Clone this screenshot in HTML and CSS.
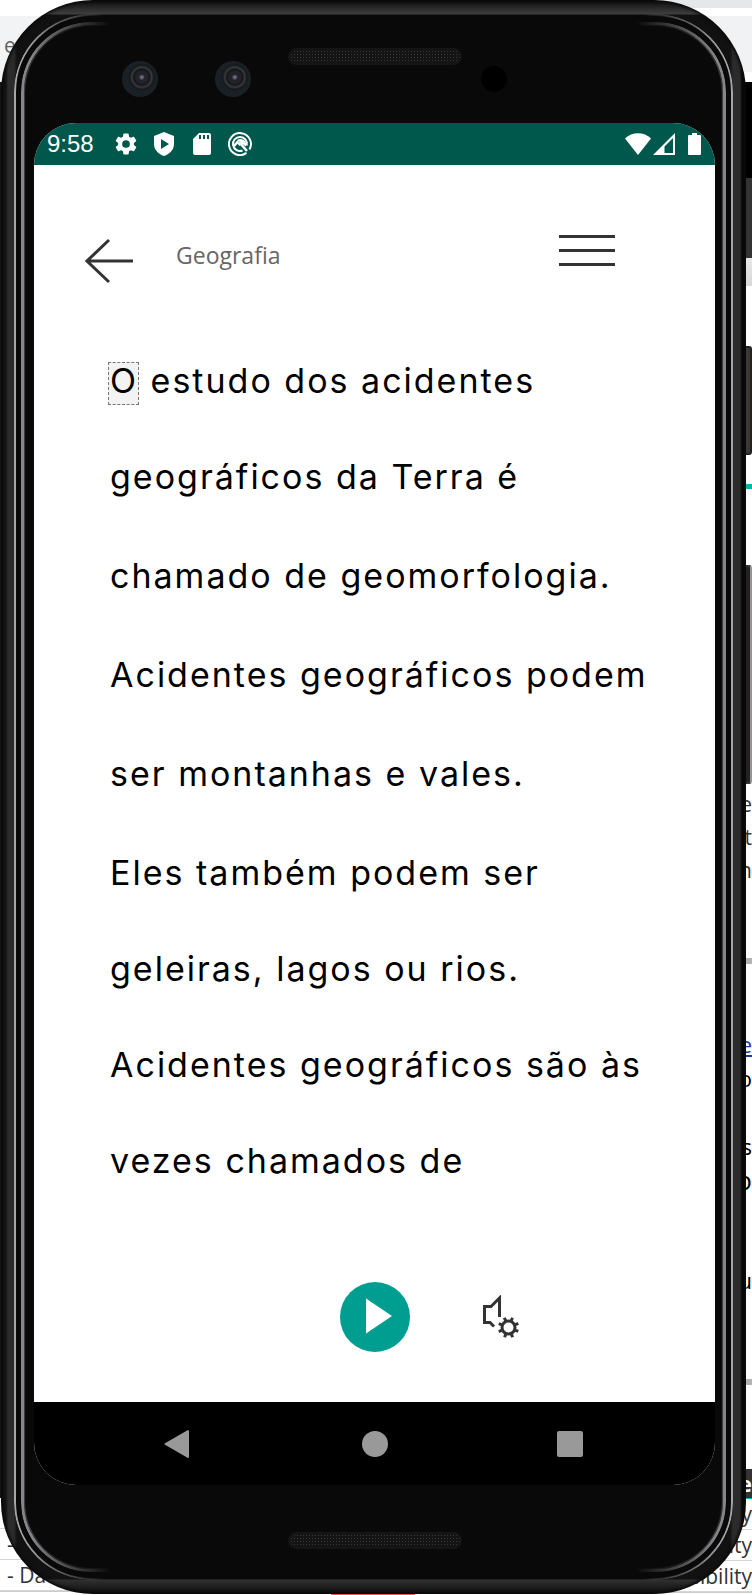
FILE: index.html
```html
<!DOCTYPE html>
<html lang="pt">
<head>
<meta charset="utf-8">
<meta name="viewport" content="width=device-width, initial-scale=1">
<title>Geografia</title>
<link rel="stylesheet" href="styles.css">
</head>
<body>
<div class="stage">
  <div class="backdrop backdrop-left">
    <div class="blank h16"></div>
    <div class="toolbar-left">e</div>
    <div class="side-shade"></div>
    <div class="list">
      <div class="list-row"></div>
      <div class="list-row">-</div>
      <div class="list-row">- Da</div>
    </div>
  </div>
  <div class="backdrop backdrop-right">
    <div class="tab-edge"></div>
    <div class="toolbar-right"></div>
    <div class="banner"></div>
    <div class="subbanner"></div>
    <div class="fade"></div>
    <div class="power"></div>
    <div class="teal"></div>
    <div class="volume"></div>
    <div class="lines"><span>e</span><span>t</span><span>n</span></div>
    <div class="rule"></div>
    <div class="copy"><a href="#more">e</a><span>o</span><span></span><span>s</span><span class="big">p</span></div>
    <div class="copy copy-late"><span>u</span></div>
    <div class="rule"></div>
    <div class="list list-right">
      <div class="list-head">e</div>
      <div class="list-row">y</div>
      <div class="list-row">ity</div>
      <div class="list-row">sibility</div>
    </div>
  </div>
  <div class="red-edge"></div>

  <div class="phone">
    <div class="bezel">
      <div class="bezel-top">
        <div class="cameras"><i class="camera"></i><i class="camera"></i></div>
        <div class="speaker"></div>
        <div class="sensor-wrap"><i class="sensor"></i></div>
      </div>

      <div class="screen">
        <div class="status">
          <span class="time">9:58</span>
          <svg class="s22" viewBox="2 2 20 20"><path fill="#fff" d="M19.14 12.94c.04-.3.06-.61.06-.94s-.02-.64-.07-.94l2.03-1.58a.49.49 0 0 0 .12-.61l-1.92-3.32a.49.49 0 0 0-.59-.22l-2.39.96a7 7 0 0 0-1.62-.94l-.36-2.54A.48.48 0 0 0 13.92 2.400h-3.840c-.24 0-.43.17-.47.41l-.36 2.540c-.59.24-1.130.57-1.620.94l-2.390-.96a.48.48 0 0 0-.59.22L2.740 8.870a.47.47 0 0 0 .12.61l2.030 1.580c-.05.3-.09.63-.09.94s.02.64.07.94l-2.030 1.580a.49.49 0 0 0-.12.61l1.920 3.320c.12.22.37.29.59.22l2.390-.96c.5.38 1.030.7 1.620.94l.36 2.540c.05.24.24.41.48.41h3.840c.24 0 .44-.17.47-.41l.36-2.540c.59-.24 1.130-.56 1.620-.94l2.390.96c.22.08.47 0 .59-.22l1.920-3.320a.47.47 0 0 0-.12-.61zM12 15.500a3.500 3.500 0 1 1 0-7 3.500 3.500 0 0 1 0 7z"/></svg>
          <svg class="s24" viewBox="0 0 24 24"><path fill="#fff" fill-rule="evenodd" d="M12 0 22 4v8c0 5.500-4 10-10 12C6 22 2 17.500 2 12V4zM9 7v10l8-5z"/></svg>
          <svg class="s22" viewBox="0 0 22 22"><path fill="#fff" fill-rule="evenodd" d="M8 0h10a2 2 0 0 1 2 2v18a2 2 0 0 1-2 2H4a2 2 0 0 1-2-2V6zM8 2v4h2V2zM12 2v4h2V2zM16 2v4h2V2z"/></svg>
          <svg class="s24" viewBox="0 0 24 24" fill="none" stroke="#fff" stroke-width="2"><path d="M18.500 20.900A11 11 0 1 1 21.500 17.500"/><path d="M14.500 18.500A7 7 0 1 1 18.800 13.500"/><path stroke-width="2.500" d="m6 14 3.500-4 3 3M12 11l7 8"/><path fill="#fff" stroke="none" d="M9 8c3-2 7-1 8.500 2 .8 1.500.8 3 .3 4.500z"/></svg>
          <span class="grow"></span>
          <svg class="wifi" viewBox="0 0 26 22"><path fill="#fff" d="M13 22 0 5.500C7-1.500 19-1.500 26 5.500z"/></svg>
          <svg class="s22" viewBox="0 0 22 22"><path fill="#fff" fill-rule="evenodd" d="M22 0v22H0zM20 5l-8.500 8.500V20H20z"/></svg>
          <svg class="battery" viewBox="0 0 13 22"><path fill="#fff" d="M4 0h5v2h3a1 1 0 0 1 1 1v18a1 1 0 0 1-1 1H1a1 1 0 0 1-1-1V3a1 1 0 0 1 1-1h3z"/></svg>
        </div>

        <header class="header">
          <button class="icon-btn back" aria-label="Voltar"><svg width="49" height="46" viewBox="0 0 49 46" fill="none" stroke="#333" stroke-width="3"><path d="M24 2 2 23l22 21M2 23h46"/></svg></button>
          <h1 class="title">Geografia</h1>
          <button class="icon-btn menu" aria-label="Menu"><svg width="56" height="32" viewBox="0 0 56 32" fill="#333"><path d="M0 0h56v3H0zM0 14h56v3H0zM0 28h56v3H0z"/></svg></button>
        </header>

        <main class="reader">
          <p class="tight"><mark>O</mark> estudo dos acidentes</p>
          <p>geográficos da Terra é</p>
          <p>chamado de geomorfologia.</p>
          <p>Acidentes geográficos podem</p>
          <p>ser montanhas e vales.</p>
          <p class="tight">Eles também podem ser</p>
          <p class="tight">geleiras, lagos ou rios.</p>
          <p class="tight">Acidentes geográficos são às</p>
          <p class="tight">vezes chamados de</p>
        </main>

        <div class="player">
          <button class="icon-btn play" aria-label="Reproduzir"><svg width="70" height="70" viewBox="0 0 70 70"><circle cx="35" cy="35" r="35" fill="#009e91"/><path fill="#fff" d="M26 16.500v35L52 34z"/></svg></button>
          <button class="icon-btn voice" aria-label="Configurar voz"><svg width="38" height="44" viewBox="0 0 38 44" fill="none" stroke="#333" stroke-width="3"><path d="M17.500 22V3L9 11.500H2.500v16H8l4 4"/><circle cx="26.500" cy="32.500" r="6.500" stroke-width="3"/><path d="M33 32.500h4M16 32.500h4M26.500 26v-4M26.500 39v4M31 28l3-3M22 28l-3-3M31 37l3 3M22 37l-3 3" transform="rotate(22 26.500 32.500)"/></svg></button>
        </div>

        <nav class="nav">
          <button class="icon-btn prev" aria-label="Voltar ao anterior"><svg width="26" height="30" viewBox="0 0 26 30"><path fill="#999" stroke="#999" stroke-width="2" stroke-linejoin="round" d="M24 2v26L1.500 15z"/></svg></button>
          <button class="icon-btn" aria-label="Início"><svg width="26" height="26" viewBox="0 0 26 26"><circle cx="13" cy="13" r="13" fill="#999"/></svg></button>
          <button class="icon-btn" aria-label="Recentes"><svg width="26" height="26" viewBox="0 0 26 26"><rect width="26" height="26" rx="2" fill="#999"/></svg></button>
        </nav>
      </div>

      <div class="bezel-bottom"><div class="speaker"></div></div>
    </div>
  </div>
</div>
</body>
</html>
```
FILE: styles.css
```css
* { box-sizing: border-box; }
body { margin: 0; background: #fff; font-family: "Open Sans", "Noto Sans", sans-serif; }
.stage { position: relative; overflow: hidden; padding: 0 6px 1px 1px; }

/* window behind the phone */
.backdrop { position: absolute; top: 0; bottom: 0; display: flex; flex-direction: column; color: #333; font-size: 21px; }
.backdrop > * { flex: none; }
.backdrop-left { left: 0; width: 50%; }
.backdrop-right { right: 0; width: 50%; }
.h16 { height: 16px; }
.toolbar-left { height: 66px; padding-left: 4px; background: #f1f3f4; color: #5f6368; line-height: 58px; }
.side-shade { height: 1416px; width: 2px; background: #151515; }
.list { border-bottom: 1px solid #ccc; }
.list-row { height: 31px; line-height: 30px; padding-left: 7px; border-bottom: 1px solid #d5d5d5; white-space: pre; }
.list-right .list-row { padding: 0; text-align: right; }
.list-head { height: 30px; line-height: 30px; text-align: right; font-weight: 700; color: #fff; background: #333; border-bottom: 1px solid #00b8a9; }
.tab-edge { height: 8px; background: #e4e8eb; }
.toolbar-right { height: 56px; margin: 8px 0 10px; background: #f1f2f4; }
.banner { height: 96px; background: #000; }
.subbanner { height: 80px; background: #333; }
.fade { height: 28px; background: linear-gradient(#e8e8e8, #d8d8d8); }
.power { height: 109px; margin-top: 60px; border: 2px solid #222; border-radius: 3px; background: #3a3936; }
.teal { height: 5px; margin: 29px 0 76px; background: #00b8a9; }
.volume { height: 219px; border: 2px solid #333; border-right: 2px solid #98958f; border-radius: 3px; background: #222; }
.lines { display: grid; grid-auto-rows: 33px; line-height: 33px; text-align: right; margin: 4px 0 71px; }
.rule { height: 6px; background: #b3b3b3; }
.copy { display: grid; grid-auto-rows: 34px; line-height: 34px; text-align: right; margin-top: 63px; color: #000; font-size: 22px; }
.copy a { color: #1a3a9c; }
.big { font-size: 26px; }
.copy-late { margin: 66px 0 82px; }
.backdrop-right .list { margin-top: 84px; }
.red-edge { position: absolute; bottom: 0; left: 44%; width: 84px; height: 3px; background: #f4564d; }

/* phone shell */
.phone {
  position: relative;
  padding: 15px;
  border-radius: 92px;
  background: linear-gradient(to bottom, #0c0c0c, #3f3f3f 14px, transparent 15px, transparent calc(100% - 15px), #303030 calc(100% - 14px), #0c0c0c),
    linear-gradient(to right, #111, #151515 5px, #2b2b2b 7px, #2b2b2b 13px, #111 16px, #111 calc(100% - 16px), #2b2b2b calc(100% - 13px), #2b2b2b calc(100% - 6px), #090909 calc(100% - 4px));
  box-shadow: inset 0 0 3px 2px #0a0a0a;
}
.phone::before, .phone::after {
  content: "";
  position: absolute;
  pointer-events: none;
  mask-image: linear-gradient(to right, #000 10px, transparent 90px, transparent calc(100% - 90px), #000 calc(100% - 10px));
}
.phone::before { inset: 14px 13px; border: 2px solid #a6a6a6; border-radius: 78px; }
.phone::after { inset: 22px 20px; border: 3px solid #85858a; border-radius: 70px; box-shadow: inset 0 0 1px 1px #444; }
.bezel { border-radius: 77px; background: #090909; padding: 0 16px 0 18px; }
.bezel-top { height: 108px; display: grid; grid-template-columns: 1fr 174px 1fr; align-items: start; padding-top: 33px; }
.cameras { display: flex; gap: 57px; padding: 13px 0 0 88px; }
.camera { width: 36px; height: 36px; border-radius: 50%; background: radial-gradient(circle at 55% 45%, #6a6d80 0 1px, #22232a 3px 6px, #15161b 8px, #3a3a3b 10px, #15191c 12px, #192026 14px); }
.speaker { width: 174px; height: 17px; border: 2px solid #151515; border-radius: 9px; background-color: #141414; background-image: radial-gradient(#3a3a3a 1px, transparent 1px); background-size: 3px 3px; }
.sensor-wrap { padding: 18px 0 0 19px; }
.sensor { display: block; width: 26px; height: 26px; border-radius: 50%; background: #000; }
.bezel-bottom { height: 94px; display: flex; justify-content: center; align-items: center; padding-top: 16px; }

.screen { overflow: hidden; border-radius: 42px; background: #fff; }
.status { height: 42px; display: flex; align-items: center; gap: 16px; padding: 0 14px 0 13px; background: #00574b; color: #fff; }
.time { font: 24px "Liberation Sans", sans-serif; margin-right: 5px; }
.s22 { width: 22px; height: 22px; }
.s24 { width: 24px; height: 24px; margin: 0 -1px; }
.grow { flex: 1; }
.wifi { width: 26px; height: 22px; margin-right: -14px; }
.battery { width: 13px; height: 22px; margin-left: -3px; }

.icon-btn { display: block; padding: 0; border: 0; background: none; line-height: 0; }
.header { display: flex; align-items: center; padding: 69px 100px 0 51px; }
.back { margin-top: 4px; }
.title { flex: 1; margin: 0 0 8px 42px; font-size: 23px; line-height: 32px; font-weight: 400; color: #666; }
.menu { margin-bottom: 16px; }

.reader { padding: 75px 0 0 76px; color: #000; font-family: Inter, sans-serif; font-size: 34px; line-height: 43px; letter-spacing: 2px; }
.reader p { margin: 0; height: 99px; white-space: nowrap; }
.reader .tight { height: 96px; }
mark { display: inline-block; margin-left: -2px; padding: 0 0 6px 1px; line-height: 35px; background: #f3f3f3; color: inherit; border: 1px dashed #777; }

.player { display: grid; grid-template-columns: 1fr 70px 1fr; align-items: center; padding: 47px 0 50px; }
.play { grid-column: 2; }
.voice { margin-left: 72px; justify-self: start; }

.nav { height: 83px; display: grid; grid-template-columns: 1fr 1fr 1fr; justify-items: center; align-items: center; padding: 0 48px; background: #000; }
.prev { margin-right: 6px; }
```
